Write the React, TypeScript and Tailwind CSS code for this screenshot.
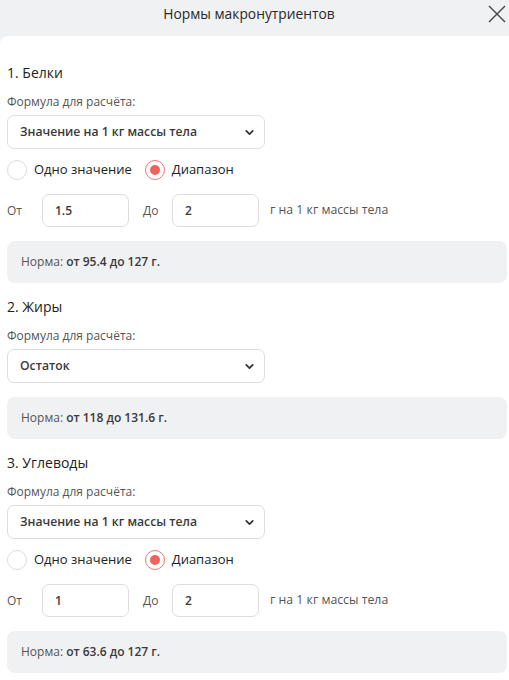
import { ChevronDown } from 'lucide-react'

type Section = {
  title: string
  formula: string
  range?: { from: string; to: string }
  norm: string
}

const sections: Section[] = [
  { title: '1. Белки', formula: 'Значение на 1 кг массы тела', range: { from: '1.5', to: '2' }, norm: 'от 95.4 до 127 г.' },
  { title: '2. Жиры', formula: 'Остаток', norm: 'от 118 до 131.6 г.' },
  { title: '3. Углеводы', formula: 'Значение на 1 кг массы тела', range: { from: '1', to: '2' }, norm: 'от 63.6 до 127 г.' },
]

function Radio({ checked, label }: { checked?: boolean; label: string }) {
  return (
    <label className="flex items-center gap-[7px]">
      <span
        className={
          checked
            ? 'w-5 h-5 rounded-full border border-[#ec7a76] bg-white flex items-center justify-center'
            : 'w-5 h-5 rounded-full border border-[#dcdcdc] bg-white'
        }
      >
        {checked && <span className="w-[10px] h-[10px] rounded-full bg-[#ee6260]" />}
      </span>
      <span className="text-[13px] text-[#222] font-medium">{label}</span>
    </label>
  )
}

function Block({ s }: { s: Section }) {
  return (
    <div className="pt-[15px] first:pt-7">
      <div className="text-[14px] leading-[18px] font-medium text-[#222]">{s.title}</div>
      <div className="mt-3 text-[12px] leading-[16px] text-[#555]">Формула для расчёта:</div>
      <div className="mt-[5px] w-[258px] h-[34px] rounded-[7px] border border-[#dedede] bg-white flex items-center justify-between pl-3 pr-2">
        <span className="text-[12.2px] font-semibold text-[#3a3a3a]">{s.formula}</span>
        <ChevronDown size={13} strokeWidth={3.2} className="text-[#333]" />
      </div>

      {s.range && (
        <>
          <div className="mt-[11px] flex items-center gap-[13px]">
            <Radio label="Одно значение" />
            <Radio checked label="Диапазон" />
          </div>
          <div className="mt-[14px] flex items-center text-[12px] text-[#555]">
            <span className="w-[35px]">От</span>
            <div className="w-[87px] h-[33px] rounded-[7px] border border-[#dedede] flex items-center px-3 font-semibold text-[#3a3a3a]">
              {s.range.from}
            </div>
            <span className="w-[29px] pl-[14px] box-content">До</span>
            <div className="w-[87px] h-[33px] rounded-[7px] border border-[#dedede] flex items-center px-3 font-semibold text-[#3a3a3a]">
              {s.range.to}
            </div>
            <span className="ml-[11px] text-[12.3px]">г на 1 кг массы тела</span>
          </div>
        </>
      )}

      <div className="mt-[14px] h-[42px] rounded-[8px] bg-[#f0f1f3] flex items-center px-[14px] text-[12px] text-[#555]">
        Норма:&nbsp;<span className="font-semibold text-[#3a3a3a]">{s.norm}</span>
      </div>
    </div>
  )
}

export default function App() {
  return (
    <div className="w-[509px] h-[680px] bg-[#f0f1f3] overflow-hidden" style={{ fontFamily: '"Open Sans", "Noto Sans", sans-serif' }}>
      {/* Header */}
      <div className="relative h-9 flex items-center justify-center pb-[7px] pr-[11px]">
        <span className="text-[13.8px] text-[#2a2a2a] font-medium">Нормы макронутриентов</span>
        <button className="absolute right-[2px] top-[4px] p-0" aria-label="Закрыть">
          <svg width="20" height="20" viewBox="0 0 20 20" fill="none" stroke="#444" strokeWidth="1.4">
            <path d="M2 2L18 18M18 2L2 18" />
          </svg>
        </button>
      </div>

      {/* Panel */}
      <div className="bg-white rounded-tl-[8px] h-full pl-[7px] pr-[2px]">
        {sections.map((s) => (
          <Block key={s.title} s={s} />
        ))}
      </div>
    </div>
  )
}
